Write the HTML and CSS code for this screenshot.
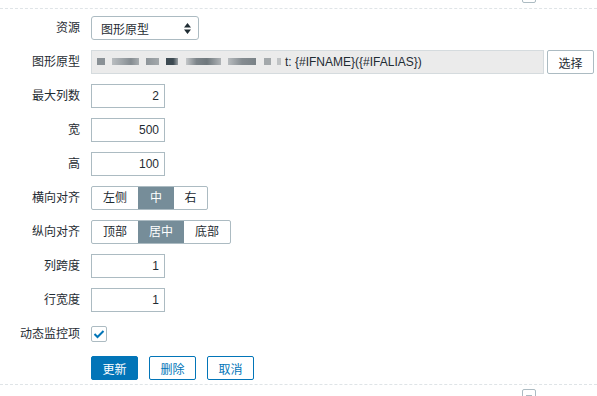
FILE: index.html
```html
<!DOCTYPE html>
<html lang="zh-CN">
<head>
    <meta charset="UTF-8">
    <meta name="viewport" content="width=device-width, initial-scale=1.0">
    <title>图形原型</title>
    <link rel="stylesheet" href="styles.css">
</head>
<body>
    <div class="widget-corner top"></div>
    <div class="divider"></div>
    <form class="form">
        <label class="label">资源</label>
        <div class="field">
            <div class="select">
                <span>图形原型</span>
                <svg class="arrows" width="7" height="11" viewBox="0 0 7 11">
                    <path d="M3.5 0 L7 4.5 L0 4.5 Z M3.5 11 L7 6.5 L0 6.5 Z" fill="#1f2c33"/>
                </svg>
            </div>
        </div>

        <label class="label">图形原型</label>
        <div class="field wide">
            <div class="readonly">
                <span class="blur">
                    <i class="b1"></i><i class="b2"></i><i class="b3"></i><i class="b4"></i><i class="b5"></i><i class="b6"></i><i class="b7"></i><i class="b8"></i>
                </span>t: {#IFNAME}({#IFALIAS})
            </div>
            <button type="button" class="btn-alt">选择</button>
        </div>

        <label class="label">最大列数</label>
        <div class="field"><input class="num" type="text" value="2"></div>

        <label class="label">宽</label>
        <div class="field"><input class="num" type="text" value="500"></div>

        <label class="label">高</label>
        <div class="field"><input class="num" type="text" value="100"></div>

        <label class="label">横向对齐</label>
        <div class="field">
            <div class="segmented">
                <span class="seg-2">左侧</span><span class="seg-1 on">中</span><span class="seg-last">右</span>
            </div>
        </div>

        <label class="label">纵向对齐</label>
        <div class="field">
            <div class="segmented">
                <span class="seg-2">顶部</span><span class="seg-2 on">居中</span><span class="seg-2">底部</span>
            </div>
        </div>

        <label class="label">列跨度</label>
        <div class="field"><input class="num" type="text" value="1"></div>

        <label class="label">行宽度</label>
        <div class="field"><input class="num" type="text" value="1"></div>

        <label class="label">动态监控项</label>
        <div class="field">
            <span class="checkbox">
                <svg width="12" height="10" viewBox="0 0 12 10">
                    <path d="M1.5 5 L4.5 8 L10.5 2" fill="none" stroke="#0275b8" stroke-width="2"/>
                </svg>
            </span>
        </div>

        <div></div>
        <div class="field actions">
            <button type="button" class="btn primary">更新</button>
            <button type="button" class="btn">删除</button>
            <button type="button" class="btn">取消</button>
        </div>
    </form>
    <div class="divider bottom"></div>
    <div class="widget-corner lower"><span></span></div>
</body>
</html>
```

FILE: styles.css
```css
body {
    margin: 0;
    font-family: "Liberation Sans", Arial, "Noto Sans CJK SC", sans-serif;
    font-size: 12px;
    color: #1f2c33;
    background-color: #fff;
    position: relative;
    height: 396px;
    overflow: hidden;
}

.divider {
    margin-top: 8px;
    border-top: 1px dashed #dfe4e7;
}
.divider.bottom {
    margin-top: 4px;
}

.widget-corner {
    position: absolute;
    left: 522px;
    width: 12px;
    height: 12px;
    border: 1px solid #acbbc2;
    border-radius: 2px;
}
.widget-corner.top {
    top: -11px;
}
.widget-corner.lower {
    top: 389px;
}
.widget-corner.lower span {
    display: block;
    margin: 5px 3px 0;
    border-top: 1px solid #acbbc2;
}

.form {
    display: grid;
    grid-template-columns: 80px 1fr;
    column-gap: 11px;
    row-gap: 10px;
    padding: 7px 3px 0 0;
}

.label {
    text-align: right;
    line-height: 24px;
    white-space: nowrap;
}

.field {
    display: flex;
    align-items: center;
    height: 24px;
}
.field.wide {
    gap: 3px;
}

.select {
    box-sizing: border-box;
    width: 108px;
    height: 24px;
    border: 1px solid #acbbc2;
    border-radius: 3px;
    display: flex;
    align-items: center;
    justify-content: space-between;
    padding: 0 7px 0 9px;
}

.readonly {
    box-sizing: border-box;
    flex: 1;
    height: 24px;
    line-height: 22px;
    background-color: #ebebeb;
    border: 1px solid #d5dbde;
    padding-left: 5px;
    white-space: nowrap;
    overflow: hidden;
}

.blur {
    display: inline-flex;
    vertical-align: middle;
    height: 7px;
    margin-top: -2px;
}
.blur i {
    display: block;
    height: 7px;
    margin-right: 7px;
}
.blur .b1 { width: 8px; background: #8a9196; }
.blur .b2 { width: 27px; background: linear-gradient(90deg, #b9bdc0, #9da3a7 40%, #858c91 70%, #a8adb0); }
.blur .b3 { width: 13px; background: linear-gradient(90deg, #8d9499, #a3a8ab); }
.blur .b4 { width: 12px; background: linear-gradient(90deg, #3d4a52 60%, #9aa0a4); margin-right: 8px; }
.blur .b5 { width: 35px; background: linear-gradient(90deg, #c4c7c9, #7d858a 30%, #6f787d 60%, #b0b4b7); }
.blur .b6 { width: 28px; background: linear-gradient(90deg, #b8bcbf, #858c91 50%, #7a8287); margin-right: 8px; }
.blur .b7 { width: 7px; background: #a3a8ab; margin-right: 6px; }
.blur .b8 { width: 4px; background: #c0c3c5; margin-right: 4px; }

input.num {
    box-sizing: border-box;
    width: 74px;
    height: 24px;
    border: 1px solid #acbbc2;
    border-radius: 0;
    padding: 0 5px;
    margin: 0;
    text-align: right;
    font-family: inherit;
    font-size: 12px;
    color: #1f2c33;
    outline: none;
}

.btn-alt {
    box-sizing: border-box;
    width: 47px;
    height: 24px;
    background-color: #fff;
    border: 1px solid #acbbc2;
    border-radius: 2px;
    font-family: inherit;
    font-size: 12px;
    color: #1f2c33;
    padding: 0;
}

.segmented {
    display: flex;
    height: 24px;
    box-sizing: border-box;
    border: 1px solid #acbbc2;
    border-radius: 2px;
    overflow: hidden;
}
.segmented span {
    line-height: 22px;
    text-align: center;
}
.segmented .seg-2 {
    width: 46px;
}
.segmented .seg-1 {
    width: 36px;
}
.segmented .seg-last {
    width: 33px;
}
.segmented span.on {
    background-color: #768d99;
    color: #fff;
}

.checkbox {
    box-sizing: border-box;
    width: 16px;
    height: 16px;
    border: 1px solid #acbbc2;
    border-radius: 2px;
    display: flex;
    align-items: center;
    justify-content: center;
}

.actions {
    gap: 11px;
}
.btn {
    box-sizing: border-box;
    width: 47px;
    height: 24px;
    background-color: #fff;
    border: 1px solid #0275b8;
    border-radius: 2px;
    color: #0275b8;
    font-family: inherit;
    font-size: 12px;
    padding: 0;
}
.btn.primary {
    background-color: #0275b8;
    color: #fff;
}
```
